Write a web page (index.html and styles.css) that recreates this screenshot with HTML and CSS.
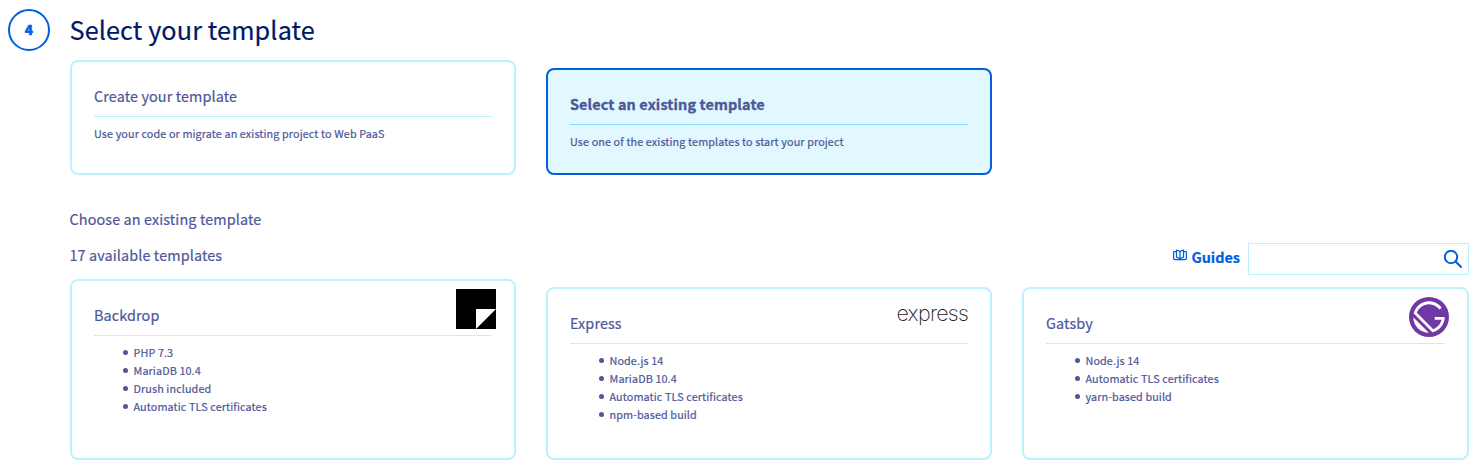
FILE: index.html
```html
<!DOCTYPE html>
<html lang="en">
<head>
<meta charset="utf-8">
<title>Select your template</title>
<link rel="stylesheet" href="styles.css">
</head>
<body>
<section class="step">
  <div class="step-number">4</div>
  <div class="step-body">
    <h1 class="step-title">Select your template</h1>
    <div class="cards modes">
      <article class="card">
        <h2 class="card-title">Create your template</h2>
        <p class="card-text">Use your code or migrate an existing project to Web PaaS</p>
      </article>
      <article class="card lower selected">
        <h2 class="card-title">Select an existing template</h2>
        <p class="card-text">Use one of the existing templates to start your project</p>
      </article>
    </div>
    <p class="choose">Choose an existing template</p>
    <div class="toolbar">
      <p class="count">17 available templates</p>
      <a class="guides">
        <svg class="guides-icon" width="14" height="12" viewBox="0 0 14 12"><path d="M3 2.500H1.200q-.6 0-.6.600v6q0 1.400 1.400 1.400h10q1.400 0 1.400-1.400v-6q0-.6-.6-.6H11M3.500 1v6.500q0 1.300 1.500 1.300t2 1.400q.5-1.400 2-1.400t1.500-1.300V1Q8 1 7 3 6 1 3.500 1M7 2.500v7" fill="none" stroke="currentColor" stroke-width="1.250"/></svg>
        <span>Guides</span>
      </a>
      <div class="search">
        <svg width="20" height="20" viewBox="0 0 20 20"><circle cx="8" cy="7" r="6.200" fill="none" stroke="currentColor" stroke-width="2"/><path d="M12.300 11.300l6.300 6.100" stroke="currentColor" stroke-width="2.100"/></svg>
      </div>
    </div>
    <div class="cards templates">
      <article class="card">
        <h2 class="card-title">Backdrop</h2>
        <svg class="logo logo-backdrop" width="40" height="40" viewBox="0 0 40 40"><path d="M0 0h40v40H0z"/><path d="M20 20h20L20 40z" fill="#fff"/></svg>
        <ul class="features"><li>PHP 7.3</li><li>MariaDB 10.4</li><li>Drush included</li><li>Automatic TLS certificates</li></ul>
      </article>
      <article class="card lower">
        <h2 class="card-title">Express</h2>
        <span class="logo logo-express">express</span>
        <ul class="features"><li>Node.js 14</li><li>MariaDB 10.4</li><li>Automatic TLS certificates</li><li>npm-based build</li></ul>
      </article>
      <article class="card lower">
        <h2 class="card-title">Gatsby</h2>
        <svg class="logo logo-gatsby" width="40" height="40" viewBox="0 0 28 28"><circle cx="14" cy="14" r="14" fill="#7038a4"/><path d="M6.200 21.800C4.100 19.700 3 16.900 3 14.200L13.900 25c-2.800-.1-5.600-1.100-7.700-3.200zm10.200 2.900L3.300 11.600C4.400 6.700 8.800 3 14 3c3.700 0 6.900 1.800 8.900 4.500l-1.500 1.300C19.700 6.500 17 5 14 5c-3.900 0-7.200 2.500-8.500 6L17 22.500c2.900-1 5.100-3.500 5.800-6.500H18v-2h7c0 5.200-3.700 9.600-8.600 10.700z" fill="#fff"/></svg>
        <ul class="features"><li>Node.js 14</li><li>Automatic TLS certificates</li><li>yarn-based build</li></ul>
      </article>
    </div>
  </div>
</section>
</body>
</html>
```
FILE: styles.css
```css
* { box-sizing: border-box; margin: 0; padding: 0; }
body {
  width: 1478px;
  height: 467px;
  overflow: hidden;
  background: #fff;
  color: #4d5799;
  font-family: "Noto Sans CJK SC", "Noto Sans CJK JP", sans-serif;
  font-size: 14.4px;
  letter-spacing: 0.11px;
  -webkit-text-stroke: 0.2px currentColor;
}
.step { display: flex; gap: 20px; padding: 9px 9px 0 8px; }
.step-number {
  width: 42px;
  height: 42px;
  border: 2px solid #0060df;
  border-radius: 50%;
  color: #0060df;
  font-size: 13.5px;
  font-weight: 900;
  line-height: 37px;
  text-align: center;
  -webkit-text-stroke-width: 0.5px;
}
.step-body { flex: 1; }
.step-title {
  height: 51px;
  margin-left: -0.5px;
  color: #001868;
  font-size: 25.2px;
  font-weight: 400;
  line-height: 41px;
  letter-spacing: 0.13px;
}
.cards { display: grid; grid-template-columns: 446px 446px 447px; gap: 30px; }
.modes { height: 115px; }
.templates { height: 181px; }
.card {
  position: relative;
  padding: 24px 22px 0;
  border: 2px solid #bef1ff;
  border-radius: 8px;
}
.lower { margin-top: 8px; }
.selected { border-color: #0060df; background: #e1f8ff; }
.card-title {
  height: 31px;
  border-bottom: 1px solid #bef1ff;
  font-size: 14.4px;
  font-weight: 400;
  line-height: 20px;
  white-space: nowrap;
}
.selected .card-title { border-color: #85d9fd; font-weight: 700; letter-spacing: 0.14px; -webkit-text-stroke-width: 0.35px; }
.card-text { margin-top: 7px; font-size: 10.8px; line-height: 18px; white-space: nowrap; }
.choose { margin: 34px 0 0 -0.5px; height: 34px; line-height: 20px; }
.toolbar { display: flex; height: 36px; }
.count { flex: 1; margin: 2px 0 0 -0.5px; line-height: 20px; }
.guides { display: flex; gap: 4px; margin-right: 8px; padding-top: 4px; color: #0060df; font-weight: 700; line-height: 20px; letter-spacing: 0; }
.guides-icon { margin-top: 2px; }
.search {
  display: flex;
  justify-content: flex-end;
  width: 221px;
  height: 32px;
  padding: 6px 5px 0 0;
  border: 1px solid #bef1ff;
  color: #0060df;
}
.features { margin-top: 7px; padding-left: 29px; list-style: none; font-size: 10.8px; line-height: 18px; }
.features li { display: flex; align-items: center; gap: 5.500px; height: 18px; }
.features li::before { content: ""; width: 5px; height: 5px; margin-top: 1px; border-radius: 50%; background: currentColor; }
.logo { position: absolute; top: 8px; right: 18px; }
.logo-express {
  top: 12px;
  right: 22px;
  color: #222;
  font-family: "Inter", sans-serif;
  font-size: 21.500px;
  font-weight: 200;
  line-height: 24px;
  letter-spacing: -0.75px;
  -webkit-text-stroke-width: 0;
}
```
